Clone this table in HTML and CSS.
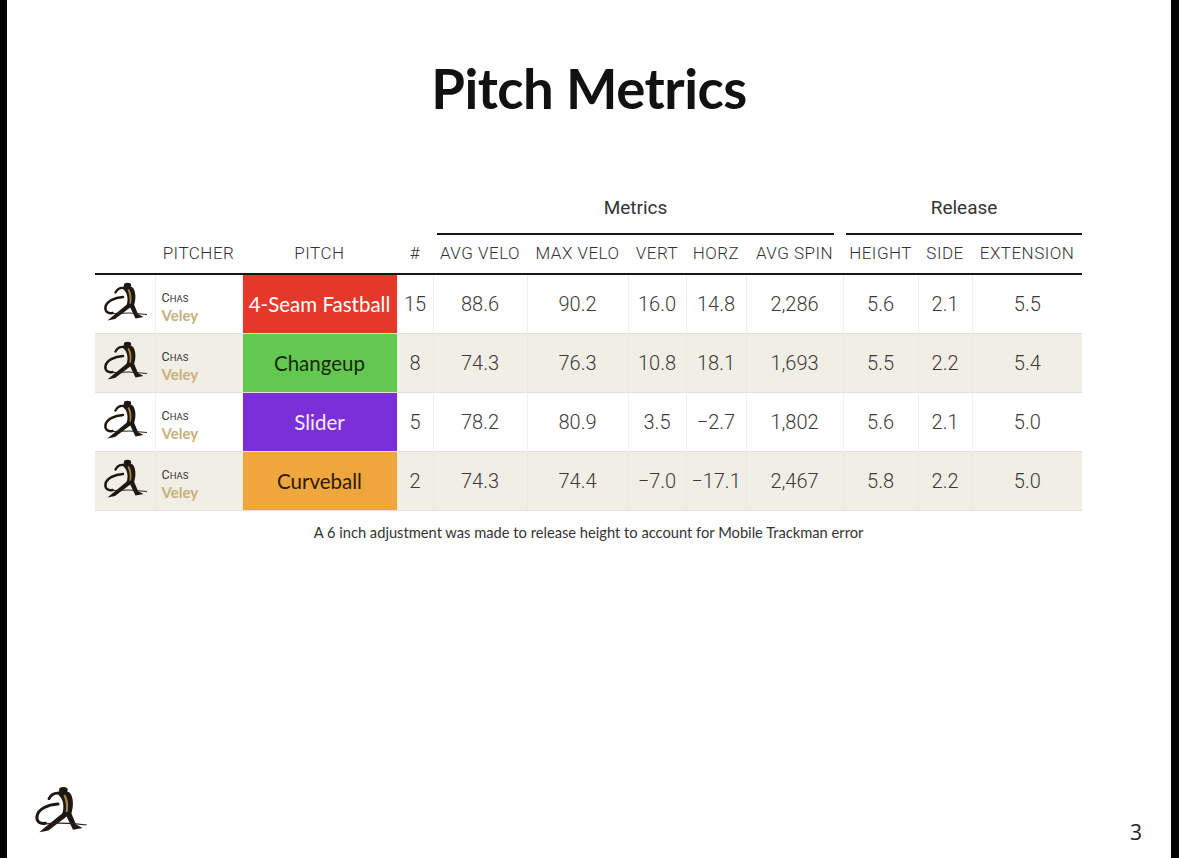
FILE: index.html
```html
<!DOCTYPE html>
<html>
<head>
<meta charset="utf-8">
<link rel="stylesheet" href="styles.css">
</head>
<body>
<svg class="defs" width="0" height="0">
  <defs>
    <symbol id="logo" viewBox="0 0 48 40">
      <ellipse cx="28.5" cy="3.2" rx="3.6" ry="2.4" fill="#1d1812"/>
      <path d="M25 6 C21 5.5 18 7.5 16.5 10.5" fill="none" stroke="#1d1812" stroke-width="2.4" stroke-linecap="round"/>
      <path d="M23.5 5 C27 3.5 32 3.5 34.5 6.5 C37 11 37 17 35 23.5 L27.5 23.5 C29.5 17 28.5 11 24.5 7.5 Z" fill="#1d1812"/>
      <path d="M30 7 C32.5 11 33 16 32 21.5 L30.5 22 C31 16.5 30.5 11.5 28.5 8 Z" fill="#a8854a"/>
      <path d="M24 15 C15 15.5 7.5 19.5 6.5 25 C5.8 29.5 9 32 13.5 31" fill="none" stroke="#1d1812" stroke-width="2.5" stroke-linecap="round"/>
      <path d="M28.5 22 L34.5 23 L16 37 L8.5 38.5 L12 35.5 Z" fill="#1d1812"/>
      <path d="M30 23 L35 22.5 L39 32 L44.5 35 L36.5 36.5 Z" fill="#1d1812"/>
      <path d="M14 31.5 Q30 30 48 32.5" fill="none" stroke="#2a231a" stroke-width="1"/>
    </symbol>
  </defs>
</svg>
<div class="slide">
  <h1 class="title">Pitch Metrics</h1>
  <table class="metrics">
    <colgroup>
      <col class="c-logo"><col class="c-pitcher"><col class="c-pitch"><col class="c-num">
      <col class="c-avgv"><col class="c-maxv"><col class="c-vert"><col class="c-horz"><col class="c-spin">
      <col class="c-height"><col class="c-side"><col class="c-ext">
    </colgroup>
    <thead>
      <tr class="spanners">
        <th rowspan="2" class="lbl blank"></th>
        <th rowspan="2" class="lbl">PITCHER</th>
        <th rowspan="2" class="lbl">PITCH</th>
        <th rowspan="2" class="lbl">#</th>
        <th colspan="5" class="span"><div class="span-in metrics-span">Metrics</div></th>
        <th colspan="3" class="span"><div class="span-in release-span">Release</div></th>
      </tr>
      <tr class="labels">
        <th class="lbl">AVG VELO</th>
        <th class="lbl">MAX VELO</th>
        <th class="lbl">VERT</th>
        <th class="lbl">HORZ</th>
        <th class="lbl">AVG SPIN</th>
        <th class="lbl">HEIGHT</th>
        <th class="lbl">SIDE</th>
        <th class="lbl">EXTENSION</th>
      </tr>
    </thead>
    <tbody>
      <tr>
        <td class="logo-cell"><svg class="row-logo"><use href="#logo"/></svg></td>
        <td class="pitcher"><span class="first">C<small>HAS</small></span><span class="last">Veley</span></td>
        <td class="pitch fastball">4-Seam Fastball</td>
        <td class="num">15</td>
        <td class="num">88.6</td><td class="num">90.2</td><td class="num">16.0</td><td class="num">14.8</td><td class="num">2,286</td>
        <td class="num">5.6</td><td class="num">2.1</td><td class="num">5.5</td>
      </tr>
      <tr class="alt">
        <td class="logo-cell"><svg class="row-logo"><use href="#logo"/></svg></td>
        <td class="pitcher"><span class="first">C<small>HAS</small></span><span class="last">Veley</span></td>
        <td class="pitch changeup">Changeup</td>
        <td class="num">8</td>
        <td class="num">74.3</td><td class="num">76.3</td><td class="num">10.8</td><td class="num">18.1</td><td class="num">1,693</td>
        <td class="num">5.5</td><td class="num">2.2</td><td class="num">5.4</td>
      </tr>
      <tr>
        <td class="logo-cell"><svg class="row-logo"><use href="#logo"/></svg></td>
        <td class="pitcher"><span class="first">C<small>HAS</small></span><span class="last">Veley</span></td>
        <td class="pitch slider">Slider</td>
        <td class="num">5</td>
        <td class="num">78.2</td><td class="num">80.9</td><td class="num">3.5</td><td class="num">&minus;2.7</td><td class="num">1,802</td>
        <td class="num">5.6</td><td class="num">2.1</td><td class="num">5.0</td>
      </tr>
      <tr class="alt">
        <td class="logo-cell"><svg class="row-logo"><use href="#logo"/></svg></td>
        <td class="pitcher"><span class="first">C<small>HAS</small></span><span class="last">Veley</span></td>
        <td class="pitch curveball">Curveball</td>
        <td class="num">2</td>
        <td class="num">74.3</td><td class="num">74.4</td><td class="num">&minus;7.0</td><td class="num">&minus;17.1</td><td class="num">2,467</td>
        <td class="num">5.8</td><td class="num">2.2</td><td class="num">5.0</td>
      </tr>
    </tbody>
    <tfoot>
      <tr>
        <td colspan="12" class="note">A 6 inch adjustment was made to release height to account for Mobile Trackman error</td>
      </tr>
    </tfoot>
  </table>
  <div class="footer">
    <svg class="foot-logo"><use href="#logo"/></svg>
    <span class="page-num">3</span>
  </div>
</div>
</body>
</html>
```

FILE: styles.css
```css
html, body {
  margin: 0;
  padding: 0;
  background: #000;
}

.defs {
  position: absolute;
  width: 0;
  height: 0;
}

.slide {
  margin: 0 8px 0 7px;
  height: 858px;
  background: #fff;
  display: flex;
  flex-direction: column;
  font-family: "Lato", "Open Sans", sans-serif;
}

.title {
  margin: 0;
  padding-top: 57px;
  height: 183px;
  box-sizing: border-box;
  text-align: center;
  font-family: "Lato", sans-serif;
  font-weight: 700;
  font-size: 54.5px;
  line-height: 62px;
  color: #111;
  letter-spacing: -0.5px;
}

.metrics {
  margin-left: 88px;
  width: 987px;
  border-collapse: collapse;
  table-layout: fixed;
  font-family: "Roboto", "Liberation Sans", sans-serif;
  color: #3a3a3a;
}

.c-logo { width: 60px; }
.c-pitcher { width: 87px; }
.c-pitch { width: 155px; }
.c-num { width: 36px; }
.c-avgv { width: 94px; }
.c-maxv { width: 101px; }
.c-vert { width: 58px; }
.c-horz { width: 60px; }
.c-spin { width: 97px; }
.c-height { width: 75px; }
.c-side { width: 54px; }
.c-ext { width: 110px; }

.metrics th {
  font-weight: 400;
  padding: 0;
}

.spanners th.span {
  height: 52px;
  vertical-align: bottom;
  text-align: center;
  font-size: 19px;
  color: #333;
}

.span-in {
  border-bottom: 2.5px solid #151515;
  padding-bottom: 14px;
  line-height: 22px;
}

.metrics-span {
  margin: 0 9px 0 4px;
}

.release-span {
  margin: 0 0 0 3px;
}

th.lbl {
  vertical-align: bottom;
  font-size: 17px;
  font-weight: 300 !important;
  color: #333;
  letter-spacing: 0.5px;
  padding-bottom: 10px !important;
  line-height: 20px;
  text-align: center;
  border-bottom: 2.5px solid #151515;
  white-space: nowrap;
}

.labels th.lbl {
  height: 39px;
  box-sizing: border-box;
}

tbody tr {
  height: 59px;
  border-bottom: 1px solid #e2e0da;
}

tbody tr.alt {
  background: #f1eee5;
}

tbody td {
  padding: 0;
  vertical-align: middle;
  border-left: 1px solid #f2f0ec;
}

tbody tr.alt td {
  border-left-color: #ebe8df;
}

tbody td:first-child {
  border-left: none;
}

.logo-cell {
  text-align: center;
}

.row-logo {
  width: 48px;
  height: 40px;
  display: block;
  margin: -4px 0 0 4px;
}

.pitcher {
  padding: 5px 0 0 6px !important;
  line-height: 17px;
}

.pitcher .first {
  display: block;
  font-family: "Roboto", sans-serif;
  font-size: 12.5px;
  color: #333;
}

.pitcher .first small {
  font-size: 9.5px;
}

.pitcher .last {
  display: block;
  font-family: "Lato", sans-serif;
  font-weight: 700;
  font-size: 15px;
  color: #c8b07c;
}

.pitch {
  text-align: center;
  font-family: "Lato", "Open Sans", sans-serif;
  font-size: 20.5px;
  white-space: nowrap;
}

.fastball { background: #e6372b; color: #fff; }
.changeup { background: #63c84f; color: #182812; }
.slider { background: #7b2fd6; color: #f3eaff; }
.curveball { background: #efa63c; color: #2b1a08; }

.num {
  text-align: center;
  font-family: "Roboto", sans-serif;
  font-size: 20px;
  font-weight: 300;
  color: #3a3a3a;
  white-space: nowrap;
}

.note {
  height: 42px;
  text-align: center;
  font-family: "Lato", "Open Sans", sans-serif;
  font-size: 14.7px;
  color: #333;
  padding: 0;
  vertical-align: middle;
}

.footer {
  margin-top: auto;
  display: flex;
  align-items: flex-end;
  justify-content: space-between;
  padding: 0 29px 14px 22px;
}

.foot-logo {
  width: 58px;
  height: 48px;
  margin-bottom: 10px;
}

.page-num {
  font-family: "Open Sans", sans-serif;
  font-size: 21px;
  color: #222;
  line-height: 24px;
}
```
